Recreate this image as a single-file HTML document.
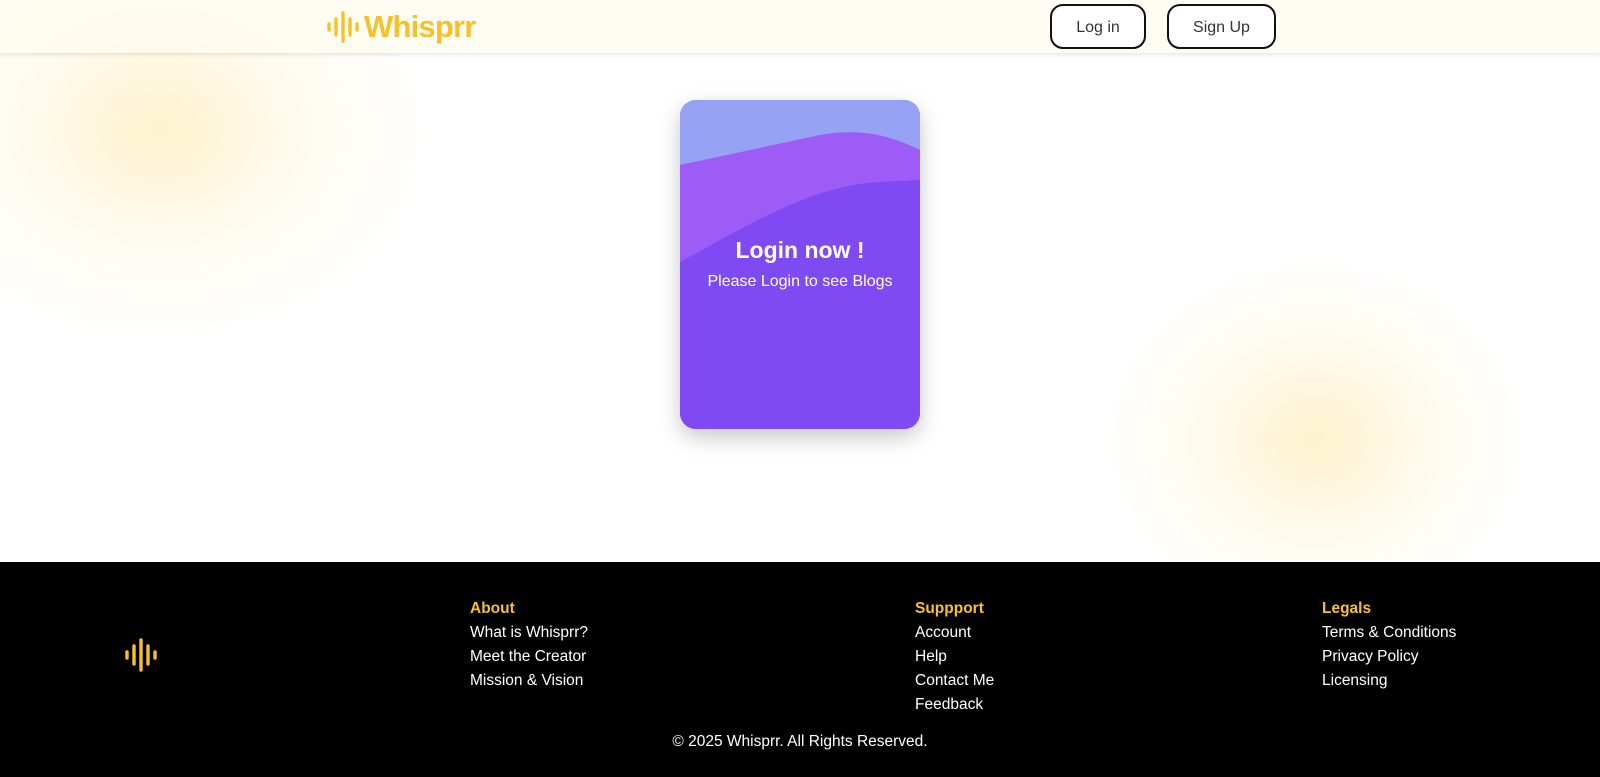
<!DOCTYPE html>
<html><head><meta charset="utf-8"><style>
*{margin:0;padding:0;box-sizing:border-box}
body{width:1600px;height:777px;overflow:hidden;font-family:"Liberation Sans",sans-serif;background:#fff;position:relative}
.blob1{position:absolute;left:-110px;top:-80px;width:540px;height:420px;border-radius:50%;background:radial-gradient(closest-side,rgba(253,238,190,.75),rgba(255,246,220,.35) 60%,rgba(255,255,255,0))}
.blob2{position:absolute;left:1105px;top:260px;width:420px;height:360px;border-radius:50%;background:radial-gradient(closest-side,rgba(253,238,190,.75),rgba(255,246,220,.35) 65%,rgba(255,255,255,0))}
header{position:absolute;left:0;top:0;width:1600px;height:53px;background:rgba(255,252,238,.7);box-shadow:0 2px 4px rgba(0,0,0,.1)}
.logo{position:absolute;left:326px;top:9px;display:flex;align-items:center;color:#f8c12b;font-weight:bold;font-size:31px;letter-spacing:-0.8px}
.btn{position:absolute;top:4px;height:45px;padding-top:3px;border:2px solid #111;border-radius:13px;background:#fff;font-size:16px;color:#333;display:flex;align-items:center;justify-content:center}
.card{position:absolute;left:680px;top:100px;width:240px;height:329px;border-radius:16px;overflow:hidden;background:linear-gradient(160deg,#8a50f2,#7a48f0);box-shadow:0 8px 22px rgba(0,0,0,.22)}
.card h2{position:absolute;top:137px;width:100%;text-align:center;color:#fff;font-size:23px}
.card p{position:absolute;top:173px;width:100%;text-align:center;color:#fff;font-size:16px}
footer{position:absolute;left:0;top:562px;width:1600px;height:215px;background:#000;color:#fff;font-size:15.5px}
.col{position:absolute;top:35px;line-height:24px}
.col b{color:#f8c12b;display:block}
.copy{position:absolute;top:171px;width:100%;text-align:center}
</style></head><body>
<div class="blob1"></div><div class="blob2"></div>
<header>
<div class="logo"><svg width="36" height="36" viewBox="0 0 36 36"><g stroke="#f8c12b" stroke-width="3.4" stroke-linecap="round"><line x1="3" y1="15" x2="3" y2="21"/><line x1="10" y1="10" x2="10" y2="26"/><line x1="17" y1="4" x2="17" y2="32"/><line x1="24" y1="10" x2="24" y2="26"/><line x1="31" y1="15" x2="31" y2="21"/></g></svg><span style="margin-left:2px">Whisprr</span></div>
<div class="btn" style="left:1050px;width:96px">Log in</div>
<div class="btn" style="left:1167px;width:109px">Sign Up</div>
</header>
<div class="card">
<svg width="240" height="329" style="position:absolute;left:0;top:0" viewBox="0 0 240 329"><rect width="240" height="120" fill="#96a2f3"/><path d="M0 65 L140 35 C180 28 210 35 240 50 L240 329 L0 329Z" fill="#9d5cf5"/><path d="M0 162 C60 130 130 85 200 82 L240 80 L240 329 L0 329Z" fill="#7f4af1"/></svg>
<h2>Login now !</h2><p>Please Login to see Blogs</p>
</div>
<footer>
<svg style="position:absolute;left:124px;top:76px" width="36" height="34" viewBox="0 0 36 34"><g stroke="#f8c12b" stroke-width="3.4" stroke-linecap="round"><line x1="3" y1="14" x2="3" y2="20"/><line x1="10" y1="8" x2="10" y2="26"/><line x1="17" y1="2" x2="17" y2="32"/><line x1="24" y1="8" x2="24" y2="26"/><line x1="31" y1="14" x2="31" y2="20"/></g></svg>
<div class="col" style="left:470px"><b>About</b>What is Whisprr?<br>Meet the Creator<br>Mission &amp; Vision</div>
<div class="col" style="left:915px"><b>Suppport</b>Account<br>Help<br>Contact Me<br>Feedback</div>
<div class="col" style="left:1322px"><b>Legals</b>Terms &amp; Conditions<br>Privacy Policy<br>Licensing</div>
<div class="copy">© 2025 Whisprr. All Rights Reserved.</div>
</footer>
</body></html>
